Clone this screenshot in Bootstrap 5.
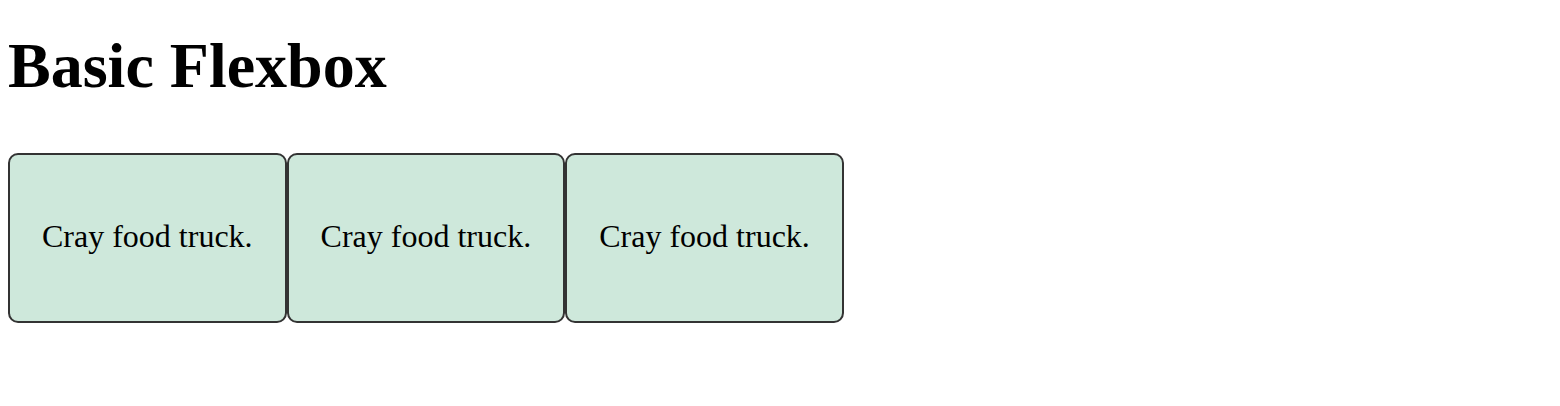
<!DOCTYPE html>
<html lang="en">
<head>
<meta charset="utf-8">
<meta name="viewport" content="width=device-width, initial-scale=1">
<title>Basic Flexbox</title>
<link href="https://cdn.jsdelivr.net/npm/bootstrap@5.3.0/dist/css/bootstrap.min.css" rel="stylesheet">
<style>
body { font-family: "Liberation Serif", "Times New Roman", serif; font-size: 32px; line-height: 36px; color: #000; background: #fff; }
.page-title { font-size: 64px; line-height: 74px; margin: 21px 0 50px; font-weight: 700; }
.flex-box { background: #cee8db; border: 2px solid #333; border-radius: 10px; padding: 63px 32px 67px; }
</style>
</head>
<body>
<main class="container-fluid p-2">
  <h1 class="page-title">Basic Flexbox</h1>
  <div class="d-flex">
    <div class="flex-box"><p class="m-0">Cray food truck.</p></div>
    <div class="flex-box"><p class="m-0">Cray food truck.</p></div>
    <div class="flex-box"><p class="m-0">Cray food truck.</p></div>
  </div>
</main>
<script src="https://cdn.jsdelivr.net/npm/bootstrap@5.3.0/dist/js/bootstrap.bundle.min.js"></script>
</body>
</html>
